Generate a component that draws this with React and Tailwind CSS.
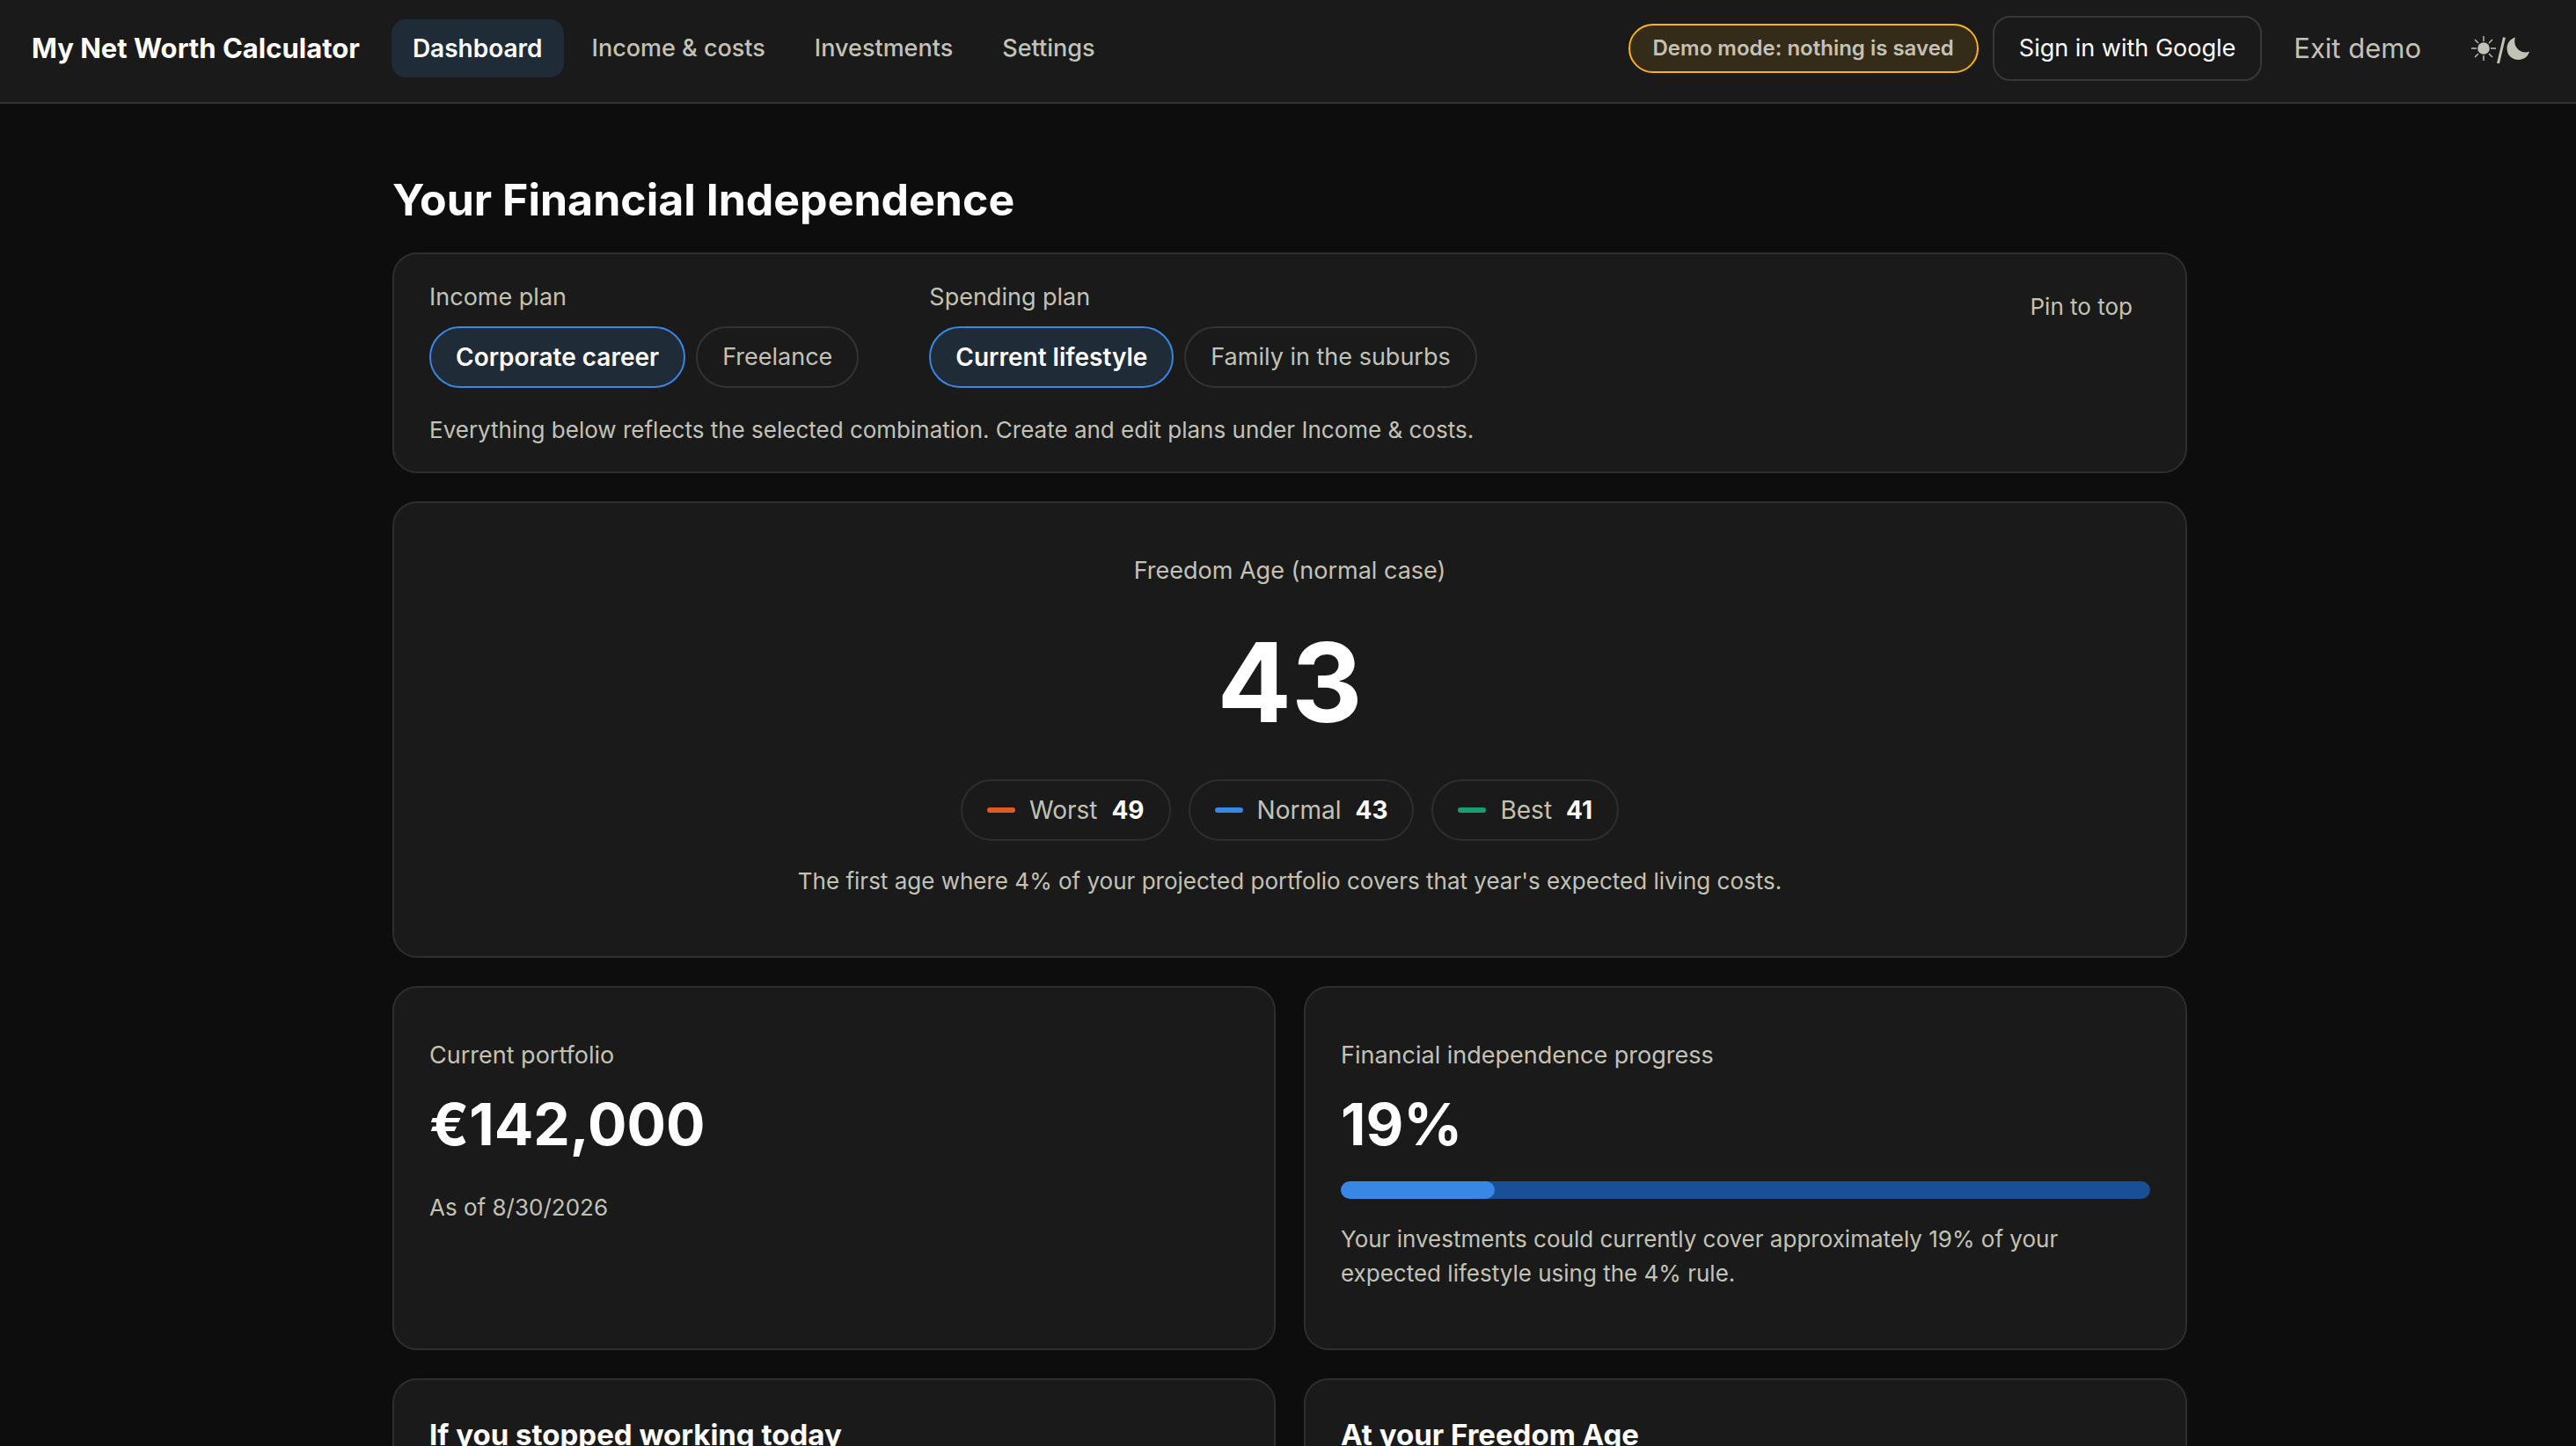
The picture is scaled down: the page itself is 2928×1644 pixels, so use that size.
import React, { useState } from 'react';

const navItems = ['Dashboard', 'Income & costs', 'Investments', 'Settings'];
const incomePlans = ['Corporate career', 'Freelance'];
const spendingPlans = ['Current lifestyle', 'Family in the suburbs'];

const scenarios = [
  { name: 'Worst', age: 49, color: 'bg-[#e05a22]' },
  { name: 'Normal', age: 43, color: 'bg-[#3987e5]' },
  { name: 'Best', age: 41, color: 'bg-[#199e70]' },
];

const ThemeIcon = () => (
  <svg width="68" height="36" viewBox="0 -2 68 36" fill="none" aria-hidden="true">
    <circle cx="15" cy="16" r="6.8" fill="currentColor" />
    <path
      d="M15 2v6M15 24v6M1 16h6M23 16h6M5 6l4 4M21 22l4 4M25 6l-4 4M9 22l-4 4"
      stroke="currentColor"
      strokeWidth="1.4"
    />
    <path d="M38.5 3.5L31.5 33" stroke="currentColor" strokeWidth="3" />
    <path
      d="M51 3.5C45.5 5 41.5 10 41.5 16C41.5 23.5 47 29 54.5 29C60.5 29 65.500 25.500 67 19.500C63.500 21 59.500 20.800 56.500 18.800C51 15.500 49 9.500 51 3.500Z"
      fill="currentColor"
    />
  </svg>
);

const Card = ({ className = '', children }) => (
  <section className={`rounded-[28px] border-2 border-[#2e2e2e] bg-[#1a1a1a] px-10 ${className}`}>
    {children}
  </section>
);

const PlanPicker = ({ label, plans }) => {
  const [selected, setSelected] = useState(plans[0]);

  return (
    <div role="group" aria-label={label}>
      <div className="text-[27px] leading-[42px]">{label}</div>
      <div className="mt-3 flex gap-3">
        {plans.map((plan) => (
          <button
            key={plan}
            type="button"
            aria-pressed={plan === selected}
            onClick={() => setSelected(plan)}
            className={`h-[70px] rounded-full border-2 px-7 whitespace-nowrap ${
              plan === selected
                ? 'border-[#3987e5] bg-[#202b38] text-[28px] font-semibold text-white'
                : 'border-[#333333] text-[27px]'
            }`}
          >
            {plan}
          </button>
        ))}
      </div>
    </div>
  );
};

const Header = () => (
  <header className="flex h-[118px] items-start justify-between border-b-2 border-[#333333] bg-[#1a1a1a] pt-[18px] pr-[52px] pl-9">
    <div className="flex h-[74px] items-center">
      <div className="text-[31px] font-bold whitespace-nowrap text-white">My Net Worth Calculator</div>
      <nav className="ml-9 flex gap-2">
        {navItems.map((item, idx) => (
          <a
            key={item}
            href="#"
            className={`flex h-[66px] items-center rounded-2xl px-6 whitespace-nowrap ${
              idx === 0 ? 'bg-[#202b38] text-[28px] font-semibold text-white' : 'text-[27px] font-medium'
            }`}
          >
            {item}
          </a>
        ))}
      </nav>
    </div>
    <div className="flex h-[74px] items-center">
      <span className="flex h-14 items-center rounded-full border-2 border-[#fab219] bg-[#352b19] px-[26px] text-[24px] font-semibold whitespace-nowrap">
        Demo mode: nothing is saved
      </span>
      <button
        type="button"
        className="ml-4 h-[74px] rounded-[20px] border-2 border-[#383838] px-7 text-[27px] whitespace-nowrap text-white"
      >
        Sign in with Google
      </button>
      <button type="button" className="ml-9 text-[31px] whitespace-nowrap">
        Exit demo
      </button>
      <button type="button" aria-label="Toggle theme" className="ml-14">
        <ThemeIcon />
      </button>
    </div>
  </header>
);

const ProgressBar = ({ value }) => (
  <div
    role="progressbar"
    aria-label="Financial independence progress"
    aria-valuenow={value}
    aria-valuemin={0}
    aria-valuemax={100}
    className="h-5 overflow-hidden rounded-full bg-[#184f95]"
  >
    <div className="h-full rounded-full bg-[#3987e5]" style={{ width: `${value}%` }} />
  </div>
);

const App = () => {
  return (
    <div className="h-screen overflow-y-auto bg-[#0d0d0d] font-['Inter','Liberation_Sans',sans-serif] text-[#c3c2b7] [scrollbar-width:none]">
      <Header />
      <main className="pb-16 pl-1">
        <div className="mx-auto max-w-[2040px] pt-[70px]">
          <h1 className="text-[50px] leading-[78px] font-bold text-white">Your Financial Independence</h1>

          <Card className="mt-[21px] flex items-start justify-between pt-[28px] pb-[28px]">
            <div>
              <div className="flex gap-20">
                <PlanPicker label="Income plan" plans={incomePlans} />
                <PlanPicker label="Spending plan" plans={spendingPlans} />
              </div>
              <p className="mt-7 text-[26px] leading-[39px]">
                Everything below reflects the selected combination. Create and edit plans under Income &amp; costs.
              </p>
            </div>
            <button type="button" className="px-5 py-3 text-[26px] leading-[39px]">
              Pin to top
            </button>
          </Card>

          <Card className="mt-8 flex flex-col items-center pt-[56px] pb-[66px] text-center">
            <h2 className="text-[27px] leading-[42px]">Freedom Age (normal case)</h2>
            <div className="mt-[36px] text-[125px] leading-[140px] font-bold text-white">43</div>
            <div className="mt-[40px] flex gap-5">
              {scenarios.map((item) => (
                <div
                  key={item.name}
                  className="flex h-[70px] items-center gap-4 rounded-full border-2 border-[#2e2e2e] px-7 text-[28px]"
                >
                  <span className={`h-[6px] w-8 rounded-full ${item.color}`} />
                  <span>{item.name}</span>
                  <strong className="font-bold text-white">{item.age}</strong>
                </div>
              ))}
            </div>
            <p className="mt-[26px] text-[26px] leading-[39px]">
              The first age where 4% of your projected portfolio covers that year's expected living costs.
            </p>
          </Card>

          <div className="mt-8 grid grid-cols-2 gap-8">
            <Card className="pt-[56px] pb-[66px]">
              <h2 className="text-[27px] leading-[42px]">Current portfolio</h2>
              <div className="mt-3 text-[66px] leading-[90px] font-bold text-white">€142,000</div>
              <p className="mt-[30px] text-[26px] leading-[39px]">As of 8/30/2026</p>
            </Card>
            <Card className="pt-[56px] pb-[66px]">
              <h2 className="text-[27px] leading-[42px]">Financial independence progress</h2>
              <div className="mt-3 mb-5 text-[66px] leading-[90px] font-bold text-white">19%</div>
              <ProgressBar value={19} />
              <p className="mt-[26px] max-w-[860px] text-[26px] leading-[39px]">
                Your investments could currently cover approximately 19% of your expected lifestyle using the 4% rule.
              </p>
            </Card>
            <Card className="pt-[38px] pb-[66px]">
              <h2 className="text-[33px] leading-[48px] font-bold text-white">If you stopped working today</h2>
            </Card>
            <Card className="pt-[38px] pb-[66px]">
              <h2 className="text-[33px] leading-[48px] font-bold text-white">At your Freedom Age</h2>
            </Card>
          </div>
        </div>
      </main>
    </div>
  );
};

export default App;
